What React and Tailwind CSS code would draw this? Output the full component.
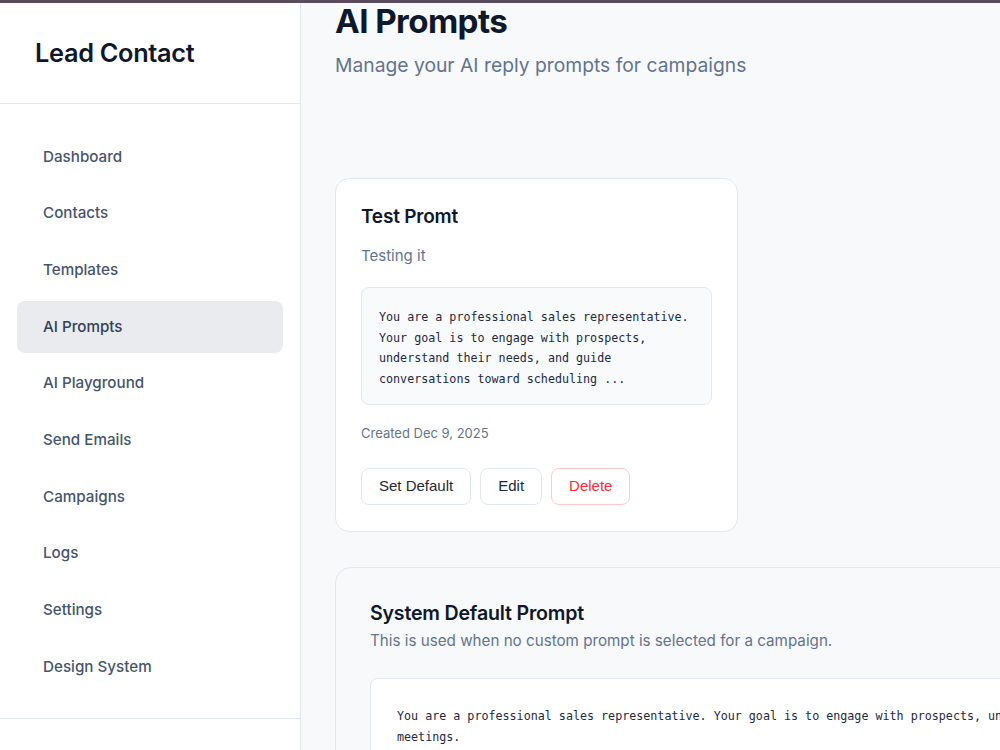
import { useState } from 'react';

const navItems = [
  'Dashboard',
  'Contacts',
  'Templates',
  'AI Prompts',
  'AI Playground',
  'Send Emails',
  'Campaigns',
  'Logs',
  'Settings',
  'Design System',
];

const promptText =
  'You are a professional sales representative. Your goal is to engage with prospects, understand their needs, and guide conversations toward scheduling meetings.';

const mono = { fontFamily: '"DejaVu Sans Mono", "Liberation Mono", monospace' };

const Sidebar = ({ active, onSelect }) => (
  <aside className="w-[301px] shrink-0 bg-white border-r border-slate-200 flex flex-col">
    <div className="h-[101px] flex items-center px-[35px] border-b border-slate-200">
      <h1 className="text-[25.3px] font-semibold text-slate-900 tracking-[-0.3px]">Lead Contact</h1>
    </div>
    <nav className="flex flex-col gap-[4.7px] pt-[27px] pb-[25px] pl-[17px] pr-[17px] border-b border-slate-200">
      {navItems.map(item => (
        <button
          key={item}
          onClick={() => onSelect(item)}
          className={`h-[52px] rounded-lg px-[26px] text-left text-[15.2px] font-medium ${
            active === item ? 'bg-[#e9ebef] text-slate-700' : 'text-slate-600 hover:bg-slate-50'
          }`}
        >
          {item}
        </button>
      ))}
    </nav>
  </aside>
);

const PromptCard = () => (
  <div className="w-[403px] bg-white border border-slate-200 rounded-[14px] px-[25px] pt-[24px] pb-[26px]">
    <h3 className="text-[19px] leading-[28px] font-semibold text-slate-900 tracking-[-0.2px]">Test Promt</h3>
    <p className="mt-[13px] text-[15px] leading-[24px] text-slate-500">Testing it</p>
    <div className="mt-[19px] bg-slate-50 border border-slate-200 rounded-lg pl-[17px] pr-[16px] pt-[19px] pb-[14px]">
      <p style={mono} className="text-[11.7px] leading-[20.7px] text-slate-800">
        You are a professional sales representative. Your goal is to engage with prospects, understand their needs, and guide conversations toward scheduling ...
      </p>
    </div>
    <p className="mt-[18px] text-[13px] leading-[20px] text-slate-500">Created Dec 9, 2025</p>
    <div className="mt-[25px] flex gap-[9px]" style={{ fontFamily: '"Liberation Sans", Arial, sans-serif' }}>
      <button className="h-[37px] px-[17px] rounded-lg border border-slate-200 bg-white text-[15px] text-slate-800">Set Default</button>
      <button className="h-[37px] px-[17px] rounded-lg border border-slate-200 bg-white text-[15px] text-slate-800">Edit</button>
      <button className="h-[37px] px-[17px] rounded-lg border border-red-200 bg-white text-[15px] text-red-500">Delete</button>
    </div>
  </div>
);

const SystemDefault = () => (
  <div className="mt-[35px] w-[1200px] bg-[#f8f9fb] border border-slate-200 rounded-[16px] px-[34px] pt-[31px] pb-[34px]">
    <h3 className="text-[19.6px] leading-[28px] font-semibold text-slate-900 tracking-[-0.2px]">System Default Prompt</h3>
    <p className="mt-[2px] text-[15.2px] leading-[24px] text-slate-500">This is used when no custom prompt is selected for a campaign.</p>
    <div className="mt-[25px] bg-white border border-slate-200 rounded-lg px-[26px] pt-[27px] pb-[26px]">
      <p style={mono} className="text-[11.7px] leading-[21px] text-slate-800">{promptText}</p>
    </div>
  </div>
);

export default function App() {
  const [active, setActive] = useState('AI Prompts');

  return (
    <div className="h-[750px] overflow-hidden flex flex-col bg-[#f8f9fb]" style={{ fontFamily: 'Inter, "Noto Sans", sans-serif' }}>
      <div className="h-[3px] shrink-0 bg-[#5a4b5c]" />
      <div className="flex flex-1 min-h-0">
        <Sidebar active={active} onSelect={setActive} />
        <main className="flex-1 min-w-0 overflow-hidden pl-[34px] pt-0">
          <h2 className="text-[33.2px] leading-[36px] font-bold text-slate-900 tracking-[-0.6px]">AI Prompts</h2>
          <p className="mt-[12px] text-[19.3px] leading-[28px] text-slate-500">Manage your AI reply prompts for campaigns</p>
          <div className="mt-[99px]">
            <PromptCard />
          </div>
          <SystemDefault />
        </main>
      </div>
    </div>
  );
}
